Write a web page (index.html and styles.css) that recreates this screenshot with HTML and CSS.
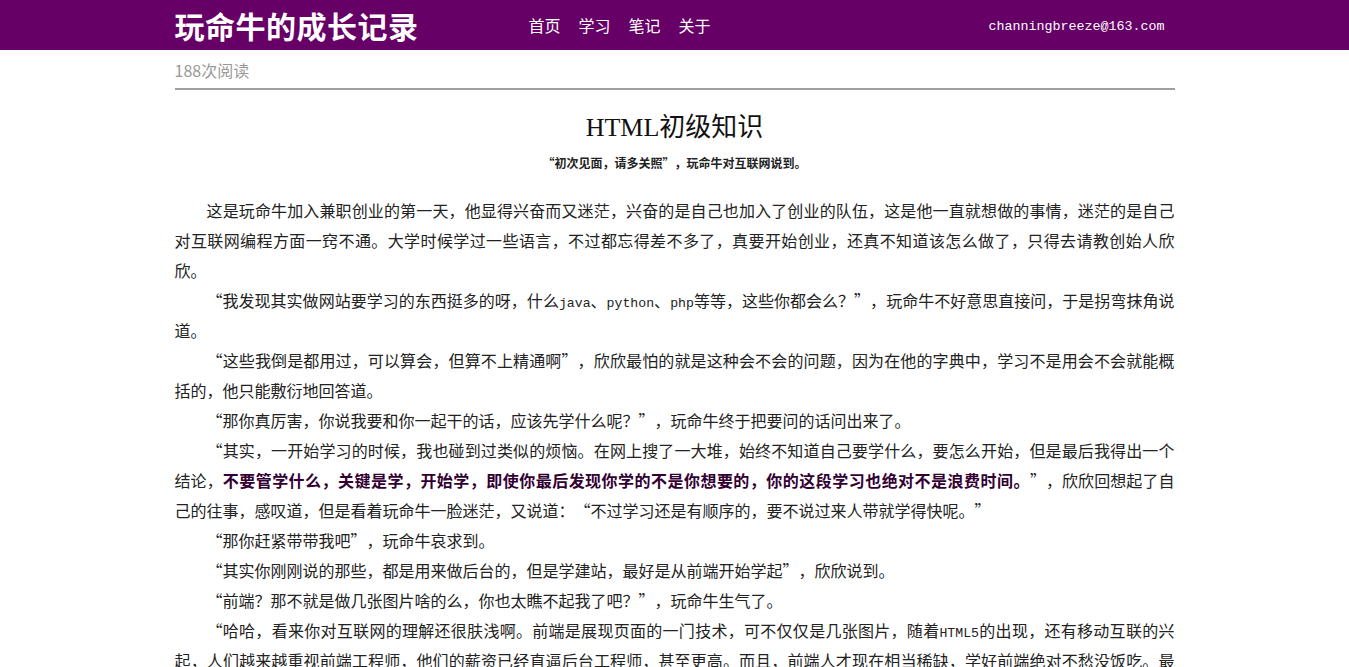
FILE: index.html
```html
<!DOCTYPE html>
<html lang="zh-CN">
<head>
<meta charset="utf-8">
<title>HTML初级知识</title>
<link rel="stylesheet" href="styles.css">
</head>
<body>
<header class="topbar">
  <div class="topbar-inner">
    <div class="logo">玩命牛的成长记录</div>
    <nav class="nav">
      <a href="#">首页</a>
      <a href="#">学习</a>
      <a href="#">笔记</a>
      <a href="#">关于</a>
    </nav>
    <div class="email">channingbreeze@163.com</div>
  </div>
</header>
<main class="container">
  <div class="meta">188次阅读</div>
  <h1 class="title">HTML初级知识</h1>
  <div class="subtitle"><span class="ql">“</span>初次见面，请多关照<span class="qr">”</span>，玩命牛对互联网说到。</div>
  <article class="content">
    <p>这是玩命牛加入兼职创业的第一天，他显得兴奋而又迷茫，兴奋的是自己也加入了创业的队伍，这是他一直就想做的事情，迷茫的是自己对互联网编程方面一窍不通。大学时候学过一些语言，不过都忘得差不多了，真要开始创业，还真不知道该怎么做了，只得去请教创始人欣欣。</p>
    <p><span class="ql">“</span>我发现其实做网站要学习的东西挺多的呀，什么<span class="latin">java</span>、<span class="latin">python</span>、<span class="latin">php</span>等等，这些你都会么？<span class="qr">”</span>，玩命牛不好意思直接问，于是拐弯抹角说道。</p>
    <p><span class="ql">“</span>这些我倒是都用过，可以算会，但算不上精通啊<span class="qr">”</span>，欣欣最怕的就是这种会不会的问题，因为在他的字典中，学习不是用会不会就能概括的，他只能敷衍地回答道。</p>
    <p><span class="ql">“</span>那你真厉害，你说我要和你一起干的话，应该先学什么呢？<span class="qr">”</span>，玩命牛终于把要问的话问出来了。</p>
    <p><span class="ql">“</span>其实，一开始学习的时候，我也碰到过类似的烦恼。在网上搜了一大堆，始终不知道自己要学什么，要怎么开始，但是最后我得出一个结论，<strong>不要管学什么，关键是学，开始学，即使你最后发现你学的不是你想要的，你的这段学习也绝对不是浪费时间。</strong><span class="qr">”</span>，欣欣回想起了自己的往事，感叹道，但是看着玩命牛一脸迷茫，又说道：<span class="ql">“</span>不过学习还是有顺序的，要不说过来人带就学得快呢。<span class="qr">”</span></p>
    <p><span class="ql">“</span>那你赶紧带带我吧<span class="qr">”</span>，玩命牛哀求到。</p>
    <p><span class="ql">“</span>其实你刚刚说的那些，都是用来做后台的，但是学建站，最好是从前端开始学起<span class="qr">”</span>，欣欣说到。</p>
    <p><span class="ql">“</span>前端？那不就是做几张图片啥的么，你也太瞧不起我了吧？<span class="qr">”</span>，玩命牛生气了。</p>
    <p><span class="ql">“</span>哈哈，看来你对互联网的理解还很肤浅啊。前端是展现页面的一门技术，可不仅仅是几张图片，随着<span class="latin">HTML5</span>的出现，还有移动互联的兴起，人们越来越重视前端工程师，他们的薪资已经直逼后台工程师，甚至更高。而且，前端人才现在相当稀缺，学好前端绝对不愁没饭吃。最重要的是，前端入门比较容易，很适合你这样的新手。<span class="qr">”</span></p>
  </article>
</main>
</body>
</html>
```

FILE: styles.css
```css
* {
  box-sizing: border-box;
}

html, body {
  margin: 0;
  padding: 0;
}

body {
  font-family: "Noto Sans CJK SC", "Liberation Sans", sans-serif;
  font-size: 16px;
  color: #222;
  background: #fff;
}

.topbar {
  background: #660066;
  height: 50px;
}

.topbar-inner {
  width: 1000px;
  margin: 0 auto;
  height: 50px;
  display: flex;
  align-items: center;
}

.logo {
  font-size: 30px;
  font-weight: bold;
  color: #fff;
  line-height: 50px;
  letter-spacing: 0.5px;
}

.nav {
  display: flex;
  gap: 18px;
  margin-left: 110px;
}

.nav a {
  color: #fff;
  text-decoration: none;
  font-size: 16px;
  line-height: 50px;
}

.email {
  margin-left: auto;
  padding-right: 10px;
  padding-top: 4px;
  color: #fff;
  font-family: "Liberation Mono", monospace;
  font-size: 13.33px;
  line-height: 46px;
}

.container {
  width: 1000px;
  margin: 0 auto;
}

.meta {
  color: #999;
  font-size: 16px;
  line-height: 24px;
  padding-top: 8px;
  padding-bottom: 6px;
  border-bottom: 2px solid #a0a0a0;
}

.title {
  margin: 18px 0 5px;
  font-family: "Liberation Serif", "Noto Sans CJK SC", serif;
  font-size: 26px;
  font-weight: normal;
  line-height: 40px;
  text-align: center;
  color: #111;
}

.subtitle {
  font-size: 12px;
  font-weight: bold;
  line-height: 20px;
  text-align: center;
  color: #222;
}

.ql,
.qr {
  display: inline-block;
  width: 1em;
  text-indent: 0;
}

.ql {
  text-align: right;
}

.qr {
  text-align: left;
}

.content {
  margin-top: 22px;
}

.content p {
  margin: 0;
  line-height: 30px;
  text-indent: 32px;
  text-align: justify;
}

.content .latin {
  font-family: "Liberation Mono", monospace;
  font-size: 13.2px;
  line-height: 1;
}

.content strong {
  color: #330033;
  font-weight: bold;
  letter-spacing: 0.4px;
}
```
